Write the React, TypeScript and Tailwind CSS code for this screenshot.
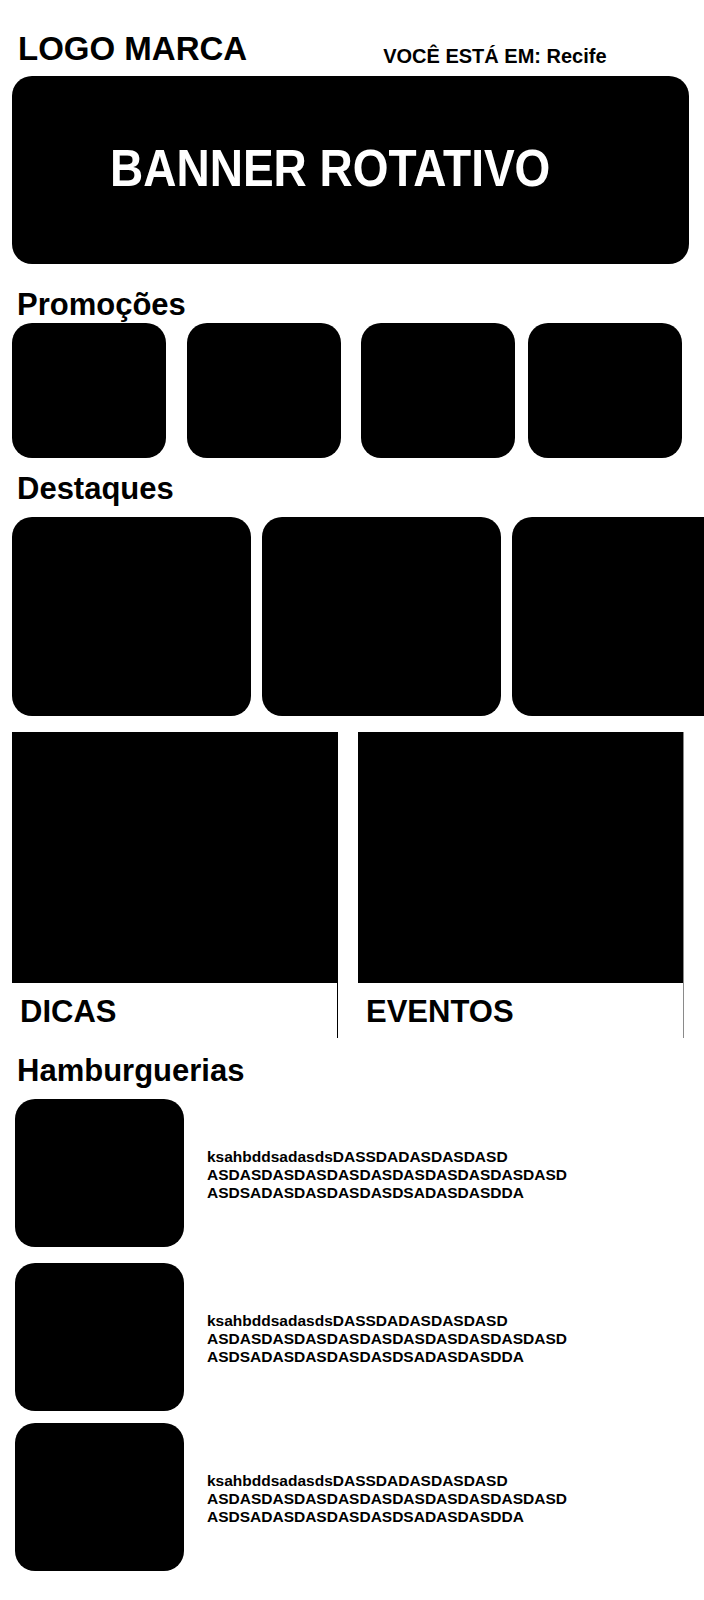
import React from "react";

const promoGaps = ["ml-[12px]", "ml-[21px]", "ml-[20px]", "ml-[13px]"];

const textLines = [
  "ksahbddsadasdsDASSDADASDASDASD",
  "ASDASDASDASDASDASDASDASDASDASDASD",
  "ASDSADASDASDASDASDSADASDASDDA",
];

// o espaçamento entre os itens no layout não é uniforme
const hamburguerias = [
  { id: 1, spacing: "" },
  { id: 2, spacing: "mt-[16px]" },
  { id: 3, spacing: "mt-[12px]" },
];

const SectionTitle = ({
  children,
  className,
}: {
  children: React.ReactNode;
  className?: string;
}) => {
  return (
    <h2 className={"ml-[17px] text-[31px] leading-[31px] " + (className ?? "")}>
      {children}
    </h2>
  );
};

const InfoCard = ({ label, lineColor }: { label: string; lineColor: string }) => {
  return (
    <div className={"flex w-[326px] shrink-0 flex-col border-r " + lineColor}>
      <div className="h-[251px] w-full bg-black" />
      <div className="h-[55px] pl-[8px] pt-[13px]">
        <h3 className="text-[31px] leading-[31px]">{label}</h3>
      </div>
    </div>
  );
};

export default function App() {
  return (
    <div className="min-h-[1600px] w-[704px] overflow-hidden bg-white font-['Liberation_Sans',Arial,sans-serif] font-bold text-black">
      <header className="flex h-[76px] items-start pt-[32px]">
        <h1 className="ml-[18px] text-[33px] leading-[33px]">LOGO MARCA</h1>
        <p className="ml-[136px] mt-[14px] text-[20px] leading-[20px]">
          VOCÊ ESTÁ EM: Recife
        </p>
      </header>

      <section className="ml-[12px] h-[188px] w-[677px] rounded-[20px] bg-black pl-[98px] pt-[69px]">
        <h2 className="block w-fit scale-y-[1.12] text-[46px] leading-[46px] text-white">
          BANNER ROTATIVO
        </h2>
      </section>

      <SectionTitle className="mt-[25px]">Promoções</SectionTitle>
      <div className="mt-[3px] flex h-[135px]">
        {promoGaps.map((gap, i) => (
          <div key={i} className={"w-[154px] shrink-0 rounded-[20px] bg-black " + gap} />
        ))}
      </div>

      <SectionTitle className="mt-[15px]">Destaques</SectionTitle>
      <div className="mt-[13px] flex gap-[11px] overflow-hidden pl-[12px]">
        {[0, 1, 2].map((i) => (
          <div key={i} className="h-[199px] w-[239px] shrink-0 rounded-[20px] bg-black" />
        ))}
      </div>

      <div className="mt-[16px] flex gap-[20px] pl-[12px]">
        <InfoCard label="DICAS" lineColor="border-black" />
        <InfoCard label="EVENTOS" lineColor="border-[#8a8a8a]" />
      </div>

      <SectionTitle className="mt-[17px]">Hamburguerias</SectionTitle>
      <div className="mt-[13px] flex flex-col">
        {hamburguerias.map((item) => (
          <div key={item.id} className={"flex items-center " + item.spacing}>
            <div className="ml-[15px] h-[148px] w-[169px] shrink-0 rounded-[20px] bg-black" />
            <div className="ml-[23px] mt-[3px] text-[15.5px] leading-[18px]">
              {textLines.map((line, j) => (
                <p key={j}>{line}</p>
              ))}
            </div>
          </div>
        ))}
      </div>
    </div>
  );
}
